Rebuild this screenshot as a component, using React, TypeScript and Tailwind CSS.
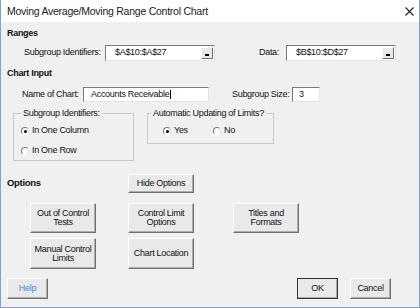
const btn =
  "flex items-center justify-center text-center leading-[9px] bg-[#e9e9e9] border border-t-white border-l-white border-b-[#6f6f6f] border-r-[#6f6f6f] shadow-[inset_-1px_-1px_0_#adadad]";

const field =
  "flex items-center bg-white border border-t-[#7a7a7a] border-l-[#7a7a7a] border-b-[#e3e3e3] border-r-[#e3e3e3]";

function Radio({ on }: { on?: boolean }) {
  return (
    <span className="flex h-[8px] w-[8px] items-center justify-center rounded-full border border-t-[#7a7a7a] border-l-[#7a7a7a] border-b-white border-r-[#dcdcdc] bg-white">
      {on && <span className="h-[3px] w-[3px] rounded-full bg-black" />}
    </span>
  );
}

function RefEdit({ value, width }: { value: string; width: string }) {
  return (
    <div className={`${field} ${width} h-[16px] justify-between pl-[9px] pr-[1px]`}>
      <span>{value}</span>
      <span className="flex h-[12px] w-[12px] items-end justify-center border border-t-white border-l-white border-b-[#6f6f6f] border-r-[#6f6f6f] bg-[#e9e9e9] pb-[2px]">
        <span className="h-[2px] w-[4px] bg-black" />
      </span>
    </div>
  );
}

export default function App() {
  return (
    <div className="h-[308px] w-[420px] border-x border-b border-[#7ba4d6] bg-[#f0f0f0] font-['Liberation_Sans',Arial,sans-serif] text-[9px] tracking-[-0.3px] text-[#111]">
      <div className="flex h-[22px] items-center justify-between bg-white pl-[6px] pr-[5px] pt-[1px]">
        <span className="text-[10.5px] tracking-[-0.25px] text-[#1a1a1a]">
          Moving Average/Moving Range Control Chart
        </span>
        <svg width="9" height="9" viewBox="0 0 9 9">
          <path d="M0.5 0.5L8.5 8.5M8.5 0.5L0.5 8.5" stroke="#222" strokeWidth="1.1" />
        </svg>
      </div>

      <div className="pl-[6px] pt-[5px]">
        <div className="h-[12px] font-bold leading-[12px]">Ranges</div>

        <div className="mt-[6px] flex h-[16px] items-center">
          <span className="ml-[17px] w-[81px]">Subgroup Identifiers:</span>
          <RefEdit value="$A$10:$A$27" width="w-[110px]" />
          <span className="ml-[44px] w-[27px]">Data:</span>
          <RefEdit value="$B$10:$D$27" width="w-[110px]" />
        </div>

        <div className="mt-[6px] h-[12px] font-bold leading-[12px]">Chart Input</div>

        <div className="mt-[8px] flex h-[15px] items-center">
          <span className="ml-[15px] w-[61px]">Name of Chart:</span>
          <div className={`${field} h-[15px] w-[126px] pl-[7px]`}>
            <span>Accounts Receivable</span>
            <span className="ml-[1px] h-[9px] w-px bg-black" />
          </div>
          <span className="ml-[23px] w-[60px]">Subgroup Size:</span>
          <div className={`${field} h-[15px] w-[28px] pl-[6px]`}>3</div>
        </div>

        <div className="mt-[5px] flex items-start">
          <fieldset className="ml-[6px] h-[54px] w-[121px] border border-[#c8c8c8]">
            <legend className="ml-[7px] px-[2px] leading-[12px]">Subgroup Identifiers:</legend>
            <div className="flex flex-col gap-[12px] pl-[7px] pt-[8px]">
              <div className="flex h-[8px] items-center gap-[3px]">
                <Radio on />
                <span>In One Column</span>
              </div>
              <div className="flex h-[8px] items-center gap-[3px]">
                <Radio />
                <span>In One Row</span>
              </div>
            </div>
          </fieldset>
          <fieldset className="ml-[13px] h-[37px] w-[127px] border border-[#c8c8c8]">
            <legend className="ml-[3px] px-[2px] leading-[12px]">
              Automatic Updating of Limits?
            </legend>
            <div className="flex pl-[15px] pt-[8px]">
              <div className="flex h-[8px] w-[50px] items-center gap-[3px]">
                <Radio on />
                <span>Yes</span>
              </div>
              <div className="flex h-[8px] items-center gap-[3px]">
                <Radio />
                <span>No</span>
              </div>
            </div>
          </fieldset>
        </div>

        <div className="mt-[13px] flex h-[19px] items-center">
          <span className="w-[121px] text-[9.5px] font-bold">Options</span>
          <div className={`${btn} h-[19px] w-[66px]`}>Hide Options</div>
        </div>

        <div className="mt-[10px] flex flex-col gap-[5px]">
          <div className="flex">
            <div className={`${btn} ml-[23px] h-[30px] w-[66px]`}>
              Out of Control
              <br />
              Tests
            </div>
            <div className={`${btn} ml-[32px] h-[30px] w-[66px]`}>
              Control Limit
              <br />
              Options
            </div>
            <div className={`${btn} ml-[39px] h-[30px] w-[66px]`}>
              Titles and
              <br />
              Formats
            </div>
          </div>
          <div className="flex">
            <div className={`${btn} ml-[23px] h-[31px] w-[66px]`}>
              Manual Control
              <br />
              Limits
            </div>
            <div className={`${btn} ml-[32px] h-[31px] w-[66px]`}>Chart Location</div>
          </div>
        </div>

        <div className="mt-[9px] flex h-[21px] items-center">
          <div className={`${btn} h-[21px] w-[41px] text-[#3d8be8]`}>Help</div>
          <div className={`${btn} ml-[249px] h-[21px] w-[41px] outline outline-1 -outline-offset-1 outline-[#333]`}>
            OK
          </div>
          <div className={`${btn} ml-[12px] h-[21px] w-[41px]`}>Cancel</div>
        </div>
      </div>
    </div>
  );
}
